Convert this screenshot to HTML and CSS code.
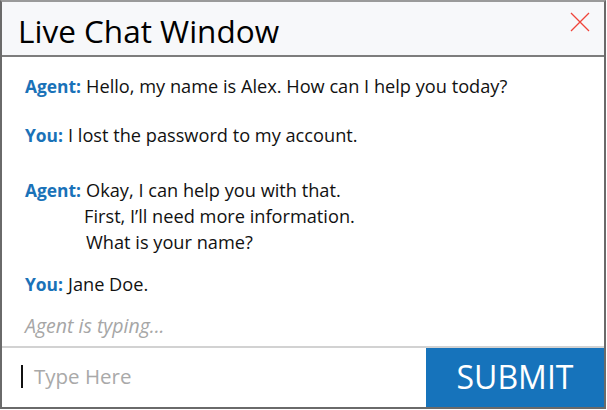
FILE: index.html
```html
<!DOCTYPE html>
<html>
<head>
<meta charset="utf-8">
<link rel="stylesheet" href="styles.css">
</head>
<body>
<div class="window">
  <header class="titlebar">
    <h1 class="title">Live Chat Window</h1>
    <svg class="close" width="20" height="20" viewBox="0 0 20 20"><path d="M1 1 L19 19 M19 1 L1 19" stroke="#f0443a" stroke-width="1.3" fill="none"/></svg>
  </header>
  <main class="messages">
    <div class="msg m1"><span class="who">Agent:</span> <span class="text">Hello, my name is Alex. How can I help you today?</span></div>
    <div class="msg m2"><span class="who">You:</span> <span class="text">I lost the password to my account.</span></div>
    <div class="msg m3"><span class="who">Agent:</span> <span class="text lines"><span>Okay, I can help you with that.</span><span class="l2">First, I’ll need more information.</span><span>What is your name?</span></span></div>
    <div class="msg m4"><span class="who">You:</span> <span class="text">Jane Doe.</span></div>
    <div class="typing">Agent is typing...</div>
  </main>
  <footer class="composer">
    <div class="input"><span class="caret"></span><span class="placeholder">Type Here</span></div>
    <button class="submit">SUBMIT</button>
  </footer>
</div>
</body>
</html>
```
FILE: styles.css
```css
html, body {
  margin: 0;
  padding: 0;
  background: #ffffff;
}
body {
  font-family: "Open Sans", "Noto Sans", sans-serif;
  color: #111;
}
.window {
  box-sizing: border-box;
  width: 606px;
  height: 409px;
  border-top: 2px solid #9a9a9a;
  border-left: 2px solid #6a6a6a;
  border-right: 2px solid #6a6a6a;
  border-bottom: 2px solid #6a6a6a;
  display: flex;
  flex-direction: column;
  background: #fff;
}
.titlebar {
  background: #f7f8fa;
  border-bottom: 2px solid #7d7d7d;
  display: flex;
  align-items: flex-start;
  justify-content: space-between;
  box-sizing: border-box;
  height: 55px;
}
.title {
  margin: 9px 0 0 16px;
  font-family: "Open Sans", sans-serif;
  font-weight: 400;
  font-size: 31.5px;
  line-height: 40px;
  color: #000;
}
.close {
  margin: 10px 14px 0 0;
}
.messages {
  flex: 1;
  padding: 16px 0 0 23px;
  font-size: 18.2px;
  line-height: 26px;
}
.msg {
  display: flex;
  align-items: baseline;
}
.who {
  color: #1a72b8;
  font-weight: 700;
  font-size: 17.4px;
  margin-right: 5px;
}
.lines {
  display: flex;
  flex-direction: column;
}
.l2 {
  margin-left: -2px;
}
.m2 { margin-top: 23px; }
.m3 { margin-top: 29px; }
.m4 { margin-top: 16px; }
.typing {
  margin-top: 16px;
  color: #a6a6a6;
  font-style: italic;
  font-size: 19.5px;
}
.composer {
  height: 61px;
  border-top: 2px solid #d2d2d2;
  display: flex;
  box-sizing: border-box;
}
.input {
  flex: 1;
  display: flex;
  align-items: center;
  padding-left: 19px;
  padding-bottom: 3px;
}
.caret {
  width: 2px;
  height: 23px;
  background: #111;
  margin-right: 11px;
}
.placeholder {
  font-size: 20.5px;
  color: #a9a9a9;
}
.submit {
  width: 178px;
  border: none;
  background: #1673bb;
  color: #fff;
  font-family: "Open Sans", sans-serif;
  font-size: 32px;
  padding: 0 0 2px 0;
}
```
